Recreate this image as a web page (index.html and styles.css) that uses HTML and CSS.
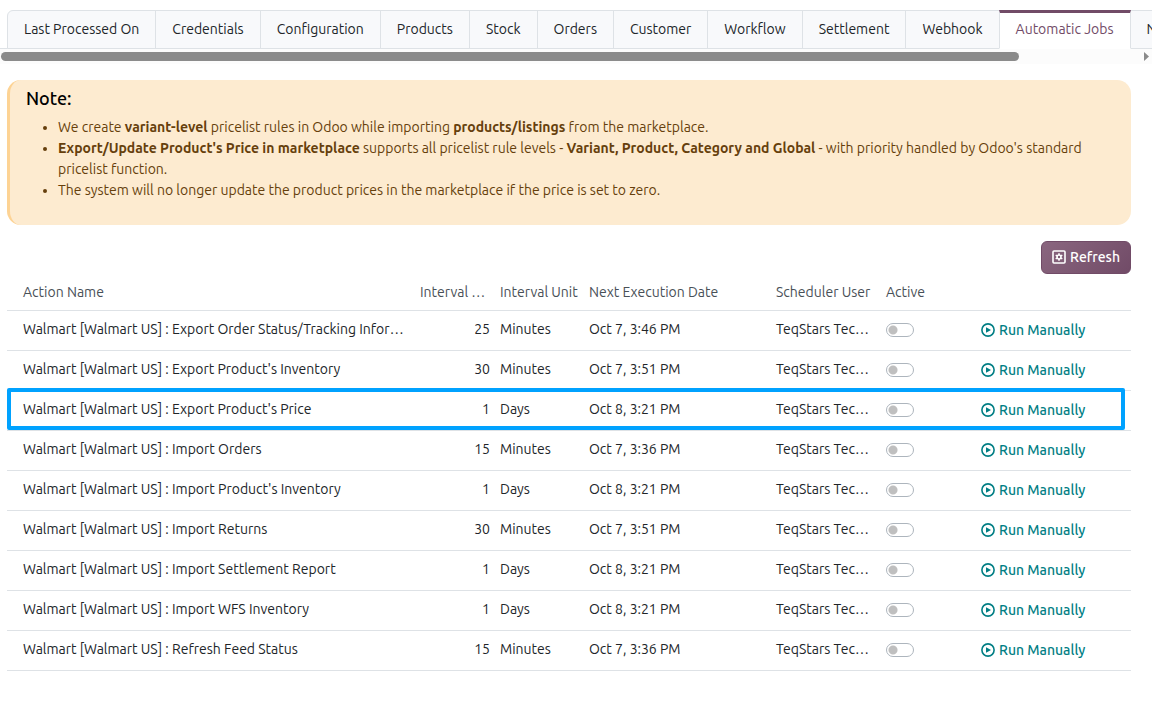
FILE: index.html
```html
<!DOCTYPE html>
<html lang="en">
<head>
    <meta charset="utf-8">
    <title>Automatic Jobs</title>
    <link rel="stylesheet" href="styles.css">
</head>
<body>
<svg class="sprite" aria-hidden="true">
    <symbol id="play" viewBox="0 0 14 14">
        <circle cx="7" cy="7" r="6.1" fill="none" stroke="currentColor" stroke-width="1.6"/>
        <path d="M5 4.2v5.6L10 7z" fill="currentColor"/>
    </symbol>
</svg>

<nav class="notebook">
    <ul class="tabs">
        <li><a href="#">Last Processed On</a></li>
        <li><a href="#">Credentials</a></li>
        <li><a href="#">Configuration</a></li>
        <li><a href="#">Products</a></li>
        <li><a href="#">Stock</a></li>
        <li><a href="#">Orders</a></li>
        <li><a href="#">Customer</a></li>
        <li><a href="#">Workflow</a></li>
        <li><a href="#">Settlement</a></li>
        <li><a href="#">Webhook</a></li>
        <li><a href="#" class="active">Automatic Jobs</a></li>
        <li><a href="#">Notes</a></li>
    </ul>
    <div class="scrollbar">
        <div class="thumb"></div>
        <svg class="arrow" viewBox="0 0 5 9"><path d="M0 0v9l5-4.5z" fill="#8b8b8b"/></svg>
    </div>
</nav>

<main class="content">
    <section class="note">
        <h2>Note:</h2>
        <ul>
            <li>We create <b>variant-level</b> pricelist rules in Odoo while importing <b>products/listings</b> from the marketplace.</li>
            <li><b>Export/Update Product's Price in marketplace</b> supports all pricelist rule levels - <b>Variant, Product, Category and Global</b> - with priority handled by Odoo's standard pricelist function.</li>
            <li>The system will no longer update the product prices in the marketplace if the price is set to zero.</li>
        </ul>
    </section>

    <div class="toolbar">
        <button type="button" class="refresh">
            <svg viewBox="0 0 14 14">
                <rect x="1" y="1" width="12" height="12" rx="1" fill="none" stroke="currentColor" stroke-width="1.6"/>
                <path d="M7 3.2v7.6M3.7 5.1l6.6 3.8M10.3 5.1L3.7 8.9" stroke="currentColor" stroke-width="1.5"/>
                <circle cx="7" cy="7" r="2.7" fill="currentColor"/>
                <circle cx="7" cy="7" r="1.2" fill="#7c5a74"/>
            </svg>
            Refresh
        </button>
    </div>

    <table class="jobs">
        <colgroup>
            <col>
            <col class="c-num">
            <col class="c-unit">
            <col class="c-date">
            <col class="c-user">
            <col class="c-active">
            <col class="c-run">
        </colgroup>
        <thead>
            <tr>
                <th>Action Name</th>
                <th>Interval Number</th>
                <th>Interval Unit</th>
                <th>Next Execution Date</th>
                <th>Scheduler User</th>
                <th>Active</th>
                <th></th>
            </tr>
        </thead>
        <tbody>
            <tr>
                <td>Walmart [Walmart US] : Export Order Status/Tracking Information</td>
                <td class="num">25</td><td>Minutes</td><td>Oct 7, 3:46 PM</td><td>TeqStars Technologies</td>
                <td><input type="checkbox" class="switch" aria-label="Active"></td>
                <td class="action"><button type="button" class="run"><svg><use href="#play"/></svg>Run Manually</button></td>
            </tr>
            <tr>
                <td>Walmart [Walmart US] : Export Product's Inventory</td>
                <td class="num">30</td><td>Minutes</td><td>Oct 7, 3:51 PM</td><td>TeqStars Technologies</td>
                <td><input type="checkbox" class="switch" aria-label="Active"></td>
                <td class="action"><button type="button" class="run"><svg><use href="#play"/></svg>Run Manually</button></td>
            </tr>
            <tr class="marked">
                <td>Walmart [Walmart US] : Export Product's Price</td>
                <td class="num">1</td><td>Days</td><td>Oct 8, 3:21 PM</td><td>TeqStars Technologies</td>
                <td><input type="checkbox" class="switch" aria-label="Active"></td>
                <td class="action"><button type="button" class="run"><svg><use href="#play"/></svg>Run Manually</button></td>
            </tr>
            <tr>
                <td>Walmart [Walmart US] : Import Orders</td>
                <td class="num">15</td><td>Minutes</td><td>Oct 7, 3:36 PM</td><td>TeqStars Technologies</td>
                <td><input type="checkbox" class="switch" aria-label="Active"></td>
                <td class="action"><button type="button" class="run"><svg><use href="#play"/></svg>Run Manually</button></td>
            </tr>
            <tr>
                <td>Walmart [Walmart US] : Import Product's Inventory</td>
                <td class="num">1</td><td>Days</td><td>Oct 8, 3:21 PM</td><td>TeqStars Technologies</td>
                <td><input type="checkbox" class="switch" aria-label="Active"></td>
                <td class="action"><button type="button" class="run"><svg><use href="#play"/></svg>Run Manually</button></td>
            </tr>
            <tr>
                <td>Walmart [Walmart US] : Import Returns</td>
                <td class="num">30</td><td>Minutes</td><td>Oct 7, 3:51 PM</td><td>TeqStars Technologies</td>
                <td><input type="checkbox" class="switch" aria-label="Active"></td>
                <td class="action"><button type="button" class="run"><svg><use href="#play"/></svg>Run Manually</button></td>
            </tr>
            <tr>
                <td>Walmart [Walmart US] : Import Settlement Report</td>
                <td class="num">1</td><td>Days</td><td>Oct 8, 3:21 PM</td><td>TeqStars Technologies</td>
                <td><input type="checkbox" class="switch" aria-label="Active"></td>
                <td class="action"><button type="button" class="run"><svg><use href="#play"/></svg>Run Manually</button></td>
            </tr>
            <tr>
                <td>Walmart [Walmart US] : Import WFS Inventory</td>
                <td class="num">1</td><td>Days</td><td>Oct 8, 3:21 PM</td><td>TeqStars Technologies</td>
                <td><input type="checkbox" class="switch" aria-label="Active"></td>
                <td class="action"><button type="button" class="run"><svg><use href="#play"/></svg>Run Manually</button></td>
            </tr>
            <tr>
                <td>Walmart [Walmart US] : Refresh Feed Status</td>
                <td class="num">15</td><td>Minutes</td><td>Oct 7, 3:36 PM</td><td>TeqStars Technologies</td>
                <td><input type="checkbox" class="switch" aria-label="Active"></td>
                <td class="action"><button type="button" class="run"><svg><use href="#play"/></svg>Run Manually</button></td>
            </tr>
        </tbody>
    </table>
</main>
</body>
</html>
```

FILE: styles.css
```css
* {
    box-sizing: border-box;
}
body {
    margin: 0;
    background: #fff;
    color: #212529;
    font: 14px/21px Ubuntu, "Noto Sans", sans-serif;
}
.sprite {
    display: none;
}

/* tabs */
.notebook {
    padding-top: 10px;
    overflow: hidden;
}
.tabs {
    display: flex;
    margin: 0;
    padding: 0 0 0 7px;
    list-style: none;
    box-shadow: inset 0 -1px #dee2e6;
}
.tabs li {
    flex: none;
}
.tabs a {
    display: block;
    height: 39px;
    padding: 8px 16px;
    margin-right: -1px;
    border: 1px solid #dee2e6;
    background: #f8f9fb;
    color: #212529;
    text-decoration: none;
}
.tabs li:first-child a {
    border-top-left-radius: 6px;
}
.tabs a.active {
    position: relative;
    padding-top: 6px;
    border-top: 3px solid #714b67;
    border-bottom-color: #fff;
    background: #fff;
    color: #714b67;
}
.scrollbar {
    display: flex;
    align-items: center;
    justify-content: space-between;
    height: 15px;
    padding: 0 3px 0 1px;
    background: #fcfcfc;
}
.thumb {
    width: 88.7%;
    height: 9px;
    border-radius: 5px;
    background: #8b8b8b;
}
.arrow {
    width: 5px;
    height: 9px;
}

.content {
    padding: 16px 21px 0 7px;
}

/* note */
.note {
    min-height: 145px;
    padding: 8px 16px 24px;
    border-left: 3px solid #fdd394;
    border-radius: 14px;
    background: #fdebd0;
    color: #663f0c;
}
.note h2 {
    margin: 0 0 8px;
    color: #000;
    font-size: 18px;
    font-weight: 500;
    line-height: 21px;
}
.note ul {
    margin: 0;
    padding-left: 32px;
}
.note b {
    font-weight: 700;
}

/* buttons */
.toolbar {
    display: flex;
    justify-content: flex-end;
    padding-top: 16px;
}
.refresh {
    display: flex;
    align-items: center;
    gap: 4px;
    height: 33px;
    padding: 0 10px;
    border: 1px solid #714b67;
    border-radius: 6px;
    background: linear-gradient(135deg, #8a667f, #714b67);
    color: #fff;
    font: inherit;
    font-weight: 500;
}
.refresh svg,
.run svg {
    width: 14px;
    height: 14px;
    margin-bottom: 2px;
}
.run {
    display: flex;
    align-items: center;
    gap: 4px;
    padding: 0;
    border: 0;
    background: none;
    color: #017e84;
    font: inherit;
    font-weight: 500;
}

/* jobs */
.jobs {
    width: 100%;
    table-layout: fixed;
    border-collapse: separate;
    border-spacing: 0;
}
.c-num { width: 80px; }
.c-unit { width: 89px; }
.c-date { width: 187px; }
.c-user { width: 110px; }
.c-active { width: 95px; }
.c-run { width: 155px; }
.jobs th,
.jobs td {
    height: 40px;
    padding: 0 5px 2px;
    border-bottom: 1px solid #dee2e6;
    overflow: hidden;
    text-align: left;
    text-overflow: ellipsis;
    white-space: nowrap;
}
.jobs th {
    height: 37px;
    padding-bottom: 0;
    color: #495057;
    font-weight: 400;
}
.jobs th:first-child,
.jobs td:first-child {
    padding-left: 16px;
}
.jobs .action {
    padding-bottom: 0;
}
.jobs .num {
    text-align: right;
}
.marked {
    position: relative;
}
.marked td:first-child::after {
    content: "";
    position: absolute;
    top: -3px;
    right: 6px;
    bottom: 1px;
    left: 0;
    border: 4px solid #00a2ff;
    border-radius: 2px;
    pointer-events: none;
}
.switch {
    appearance: none;
    display: block;
    width: 28px;
    height: 14px;
    margin: 0;
    border: 1px solid #adb5bd;
    border-radius: 7px;
    background: radial-gradient(circle at 6px 6px, #bfbfbf 4px, transparent 5px);
}
```
